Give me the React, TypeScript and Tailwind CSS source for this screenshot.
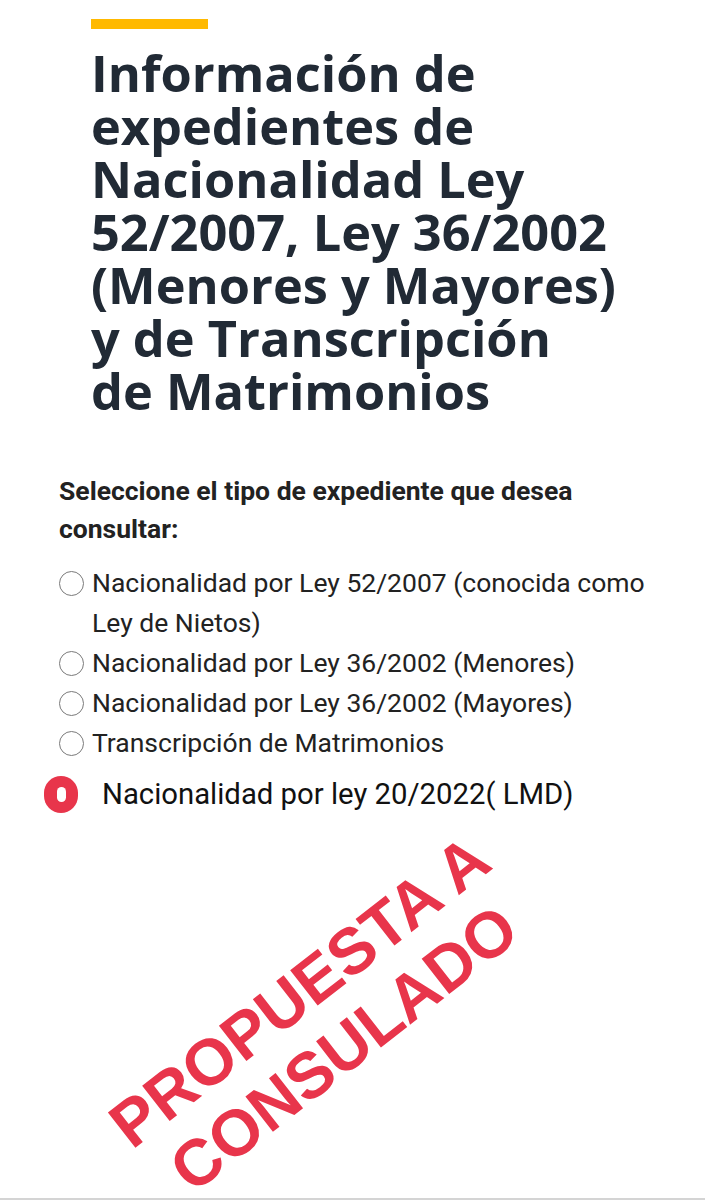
import { useState } from 'react';

const options = [
  { id: 'ley52', label: ['Nacionalidad por Ley 52/2007 (conocida como', 'Ley de Nietos)'] },
  { id: 'menores', label: ['Nacionalidad por Ley 36/2002 (Menores)'] },
  { id: 'mayores', label: ['Nacionalidad por Ley 36/2002 (Mayores)'] },
  { id: 'matrimonios', label: ['Transcripción de Matrimonios'] }
];

const titleLines = [
  'Información de',
  'expedientes de',
  'Nacionalidad Ley',
  '52/2007, Ley 36/2002',
  '(Menores y Mayores)',
  'y de Transcripción',
  'de Matrimonios'
];

export default function App() {
  const [selected, setSelected] = useState<string>('lmd');

  return (
    <div className="flex h-[1200px] w-[705px] flex-col overflow-hidden border-b-2 border-[#d4d4d4] bg-white">
      {/* Header */}
      <div className="pl-[91px] pt-[19px]">
        <div className="h-[10px] w-[117px] bg-[#ffb900]" />
        <h1 className="mt-[17px] font-['Open_Sans',sans-serif] text-[50.5px] font-bold leading-[53px] text-[#212a35]">
          {titleLines.map(line => (
            <span key={line} className="block whitespace-nowrap">
              {line}
            </span>
          ))}
        </h1>
      </div>

      {/* Tipo de expediente */}
      <div className="mt-[55px] pl-[59px] font-['Roboto',sans-serif]">
        <p className="text-[26.5px] font-bold leading-[38px] text-[#222]">
          Seleccione el tipo de expediente que desea
          <br />
          consultar:
        </p>
        <div className="mt-[15px]">
          {options.map(opt => (
            <label key={opt.id} className="flex cursor-pointer items-start" onClick={() => setSelected(opt.id)}>
              <span className="mt-[8px] h-[25px] w-[25px] shrink-0 rounded-full border-[1.5px] border-[#7a7a7a]" />
              <span className="ml-[8px] text-[26.5px] leading-[40px] text-[#222]">
                {opt.label.map(l => (
                  <span key={l} className="block whitespace-nowrap">
                    {l}
                  </span>
                ))}
              </span>
            </label>
          ))}
          <label className="-ml-[15px] mt-[11px] flex cursor-pointer items-center" onClick={() => setSelected('lmd')}>
            <span className="flex h-[37px] w-[34px] shrink-0 items-center justify-center rounded-full bg-[#e8354b]">
              {selected === 'lmd' && <span className="h-[15px] w-[9px] rounded-full bg-white" />}
            </span>
            <span className="ml-[24px] whitespace-nowrap text-[29.3px] leading-[40px] text-[#111]">
              Nacionalidad por ley 20/2022( LMD)
            </span>
          </label>
        </div>
      </div>

      {/* Sello */}
      <div className="flex flex-1 items-center justify-center">
        <div className="translate-x-[-31px] translate-y-[14px] -rotate-[38deg] text-center font-['Liberation_Sans',Arial,sans-serif] text-[65px] font-bold leading-[72px] text-[#e8354b]">
          <div className="whitespace-nowrap">PROPUESTA A</div>
          <div className="whitespace-nowrap">CONSULADO</div>
        </div>
      </div>
    </div>
  );
}
